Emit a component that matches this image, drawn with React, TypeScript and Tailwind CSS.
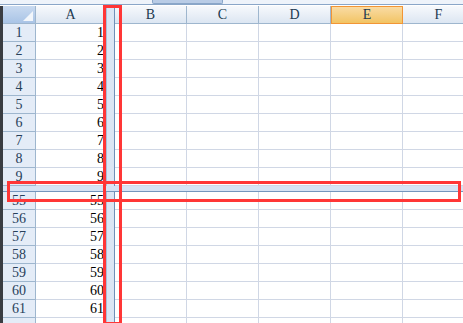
import React from "react";

const COLS = ["B", "C", "D", "E", "F"];
const TOP_ROWS = [1, 2, 3, 4, 5, 6, 7, 8, 9];
const BOTTOM_ROWS = [55, 56, 57, 58, 59, 60, 61];

function VSplit() {
  return (
    <div className="flex h-full w-[9px] shrink-0">
      <div className="w-px bg-[#a9bfd9]" />
      <div className="w-[7px] bg-[#dbe6f4]" />
      <div className="w-px bg-[#6f90b8]" />
    </div>
  );
}

function Row({ n, label }: { n: number; label: boolean }) {
  return (
    <div className="flex h-[18px] shrink-0">
      <div className="flex w-[33px] shrink-0 items-center justify-center border-b border-r border-[#9eb6ce] bg-[#e4ecf7] text-[#27405a]">
        {label ? n : null}
      </div>
      <div className="flex w-[70px] shrink-0 items-center justify-end border-b border-r border-[#d0d7e5] bg-white pr-[1px] text-black">
        {label ? n : null}
      </div>
      <VSplit />
      {COLS.map((c) => (
        <div key={c} className="w-[72px] shrink-0 border-b border-r border-[#d0d7e5] bg-white" />
      ))}
    </div>
  );
}

function HeaderRow() {
  return (
    <div className="flex h-[18px] shrink-0">
      <div className="relative w-[33px] shrink-0 border-b border-r border-[#9eb6ce] bg-gradient-to-b from-[#c9daf0] to-[#a9c4e6]">
        <svg className="absolute bottom-[2px] right-[2px]" width="10" height="10" viewBox="0 0 10 10">
          <polygon points="10,0 10,10 0,10" fill="#f2f6fb" />
        </svg>
      </div>
      <div className="flex w-[70px] shrink-0 items-center justify-center border-b border-r border-[#9eb6ce] bg-gradient-to-b from-[#f7f9fc] to-[#dce6f2] text-[#213a50]">
        A
      </div>
      <VSplit />
      {COLS.map((c) =>
        c === "E" ? (
          <div
            key={c}
            className="flex w-[72px] shrink-0 items-center justify-center border border-[#f29536] bg-gradient-to-b from-[#f9dba3] to-[#f2c462] text-[#213a50]"
          >
            {c}
          </div>
        ) : (
          <div
            key={c}
            className="flex w-[72px] shrink-0 items-center justify-center border-b border-r border-[#9eb6ce] bg-gradient-to-b from-[#f7f9fc] to-[#dce6f2] text-[#213a50]"
          >
            {c}
          </div>
        )
      )}
    </div>
  );
}

function HSplit() {
  return (
    <div className="flex h-[6px] shrink-0 flex-col">
      <div className="h-[5px] bg-[#d6e3f4]" />
      <div className="h-px bg-[#7596bd]" />
    </div>
  );
}

export default function App() {
  return (
    <div
      className="relative h-[323px] w-[463px] overflow-hidden bg-white text-[14px] leading-none"
      style={{ fontFamily: '"Liberation Serif", serif' }}
    >
      <div className="flex h-full flex-col">
        <div className="relative h-[6px] shrink-0 bg-[#eef3fa]">
          <div className="absolute left-[152px] top-0 h-[4px] w-[71px] rounded-b-[2px] border-x border-b border-[#8aa6c8] bg-[#b9cce6]" />
          <div className="absolute left-0 right-0 top-[4px] h-px bg-[#8aa6c8]" />
          <div className="absolute left-0 right-0 top-[5px] h-px bg-white" />
        </div>
        <div className="flex min-h-0 flex-1">
          <div className="w-[3px] shrink-0 bg-[#3a3d42]" />
          <div className="flex min-w-0 flex-1 flex-col overflow-hidden">
            <HeaderRow />
            {TOP_ROWS.map((n) => (
              <Row key={n} n={n} label />
            ))}
            <HSplit />
            {BOTTOM_ROWS.map((n) => (
              <Row key={n} n={n} label />
            ))}
            <Row n={62} label={false} />
          </div>
        </div>
      </div>
      <div className="pointer-events-none absolute left-[103px] top-[5px] h-[320px] w-[19px] border-[3px] border-[#ff3636]" />
      <div className="pointer-events-none absolute left-[7px] top-[181px] h-[21px] w-[454px] border-[3px] border-[#ff3636]" />
    </div>
  );
}
